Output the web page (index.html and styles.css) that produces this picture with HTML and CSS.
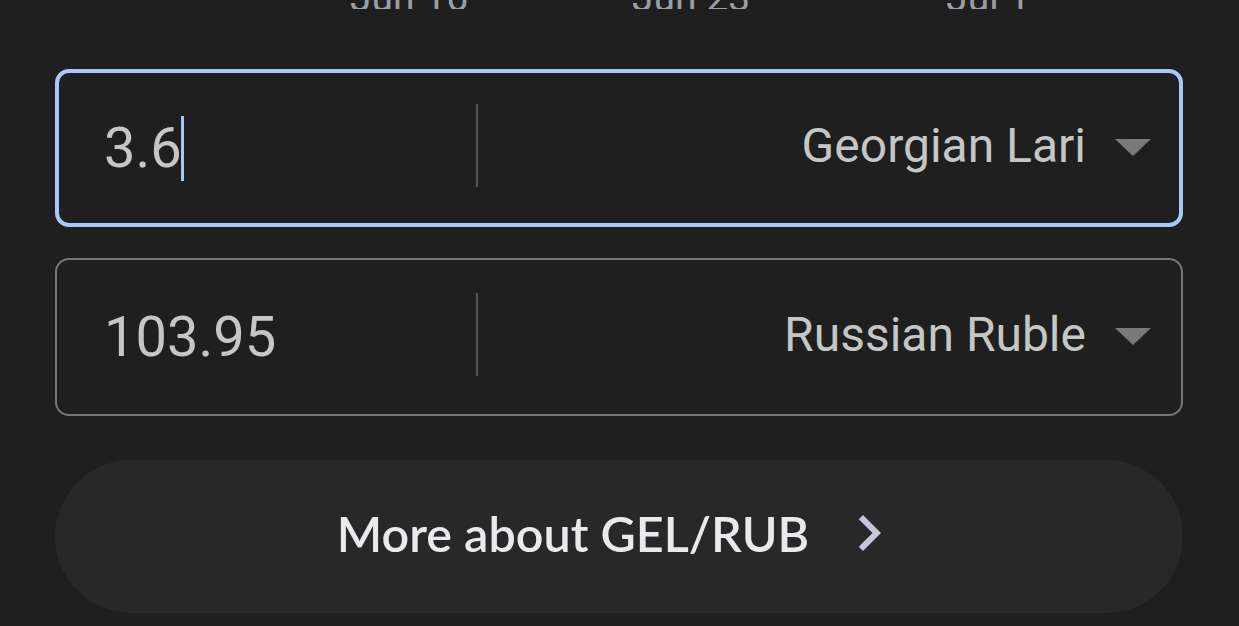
FILE: index.html
```html
<!DOCTYPE html>
<html lang="en">
<head>
    <meta charset="UTF-8">
    <meta name="viewport" content="width=device-width, initial-scale=1.0">
    <title>GEL to RUB</title>
    <link rel="stylesheet" href="styles.css">
</head>
<body>
    <div class="axis">
        <span class="tick tick-1">Jun 16</span>
        <span class="tick tick-2">Jun 23</span>
        <span class="tick tick-3">Jul 1</span>
    </div>

    <div class="converter">
        <div class="field focused">
            <div class="amount">3.6<span class="caret"></span></div>
            <div class="divider"></div>
            <div class="currency">
                <span class="name">Georgian Lari</span>
                <span class="arrow"></span>
            </div>
        </div>

        <div class="field">
            <div class="amount">103.95</div>
            <div class="divider"></div>
            <div class="currency">
                <span class="name">Russian Ruble</span>
                <span class="arrow"></span>
            </div>
        </div>

        <div class="more">
            <span>More about GEL/RUB</span>
            <svg width="72" height="72" viewBox="0 0 24 24"><path d="M10 6L8.59 7.41 13.17 12l-4.58 4.59L10 18l6-6z" fill="#c4c6dc"/></svg>
        </div>
    </div>
</body>
</html>
```

FILE: styles.css
```css
body {
    margin: 0;
    background-color: #1f1f1f;
    font-family: Roboto, "Liberation Sans", sans-serif;
    overflow: hidden;
}
.axis {
    display: flex;
    height: 9px;
    overflow: hidden;
    align-items: flex-end;
}
.tick {
    color: #9aa0a6;
    font-size: 39px;
    line-height: 39px;
    margin-bottom: -9px;
}
.tick-1 { margin-left: 350px; }
.tick-2 { margin-left: 164px; }
.tick-3 { margin-left: 196px; }

.converter {
    padding: 60px 56px 0 55px;
}
.field {
    box-sizing: border-box;
    height: 158px;
    border: 2px solid #747775;
    border-radius: 14px;
    display: flex;
    align-items: center;
    margin-bottom: 31px;
}
.field.focused {
    border: 4px solid #a8c7fa;
}
.amount {
    width: 372px;
    padding-left: 47px;
    color: #c4c7c5;
    font-size: 56px;
    display: flex;
    align-items: center;
}
.focused .amount {
    padding-left: 45px;
}
.caret {
    display: inline-block;
    width: 3px;
    height: 65px;
    margin-left: -1px;
    background-color: #a8c7fa;
}
.divider {
    width: 2px;
    height: 83px;
    margin-top: -6px;
    background-color: #555;
}
.currency {
    flex: 1;
    display: flex;
    justify-content: flex-end;
    align-items: center;
    color: #c4c7c5;
    font-size: 48px;
    padding-right: 30px;
}
.focused .currency {
    padding-right: 28px;
}
.name {
    margin-bottom: 6px;
}
.arrow {
    width: 0;
    height: 0;
    margin-left: 29px;
    margin-top: -2px;
    border-left: 18px solid transparent;
    border-right: 18px solid transparent;
    border-top: 17px solid #7a7a7a;
    filter: blur(0.7px);
}
.more {
    box-sizing: border-box;
    height: 153px;
    margin-top: 44px;
    border-radius: 77px;
    background-color: #282828;
    display: flex;
    align-items: center;
    justify-content: center;
    padding-left: 4px;
    padding-bottom: 7px;
    color: #e8eaed;
    font-family: Lato, "Open Sans", sans-serif;
    font-weight: 600;
    font-size: 48.5px;
}
.more svg {
    margin-left: 24px;
    margin-top: -1px;
}
```
